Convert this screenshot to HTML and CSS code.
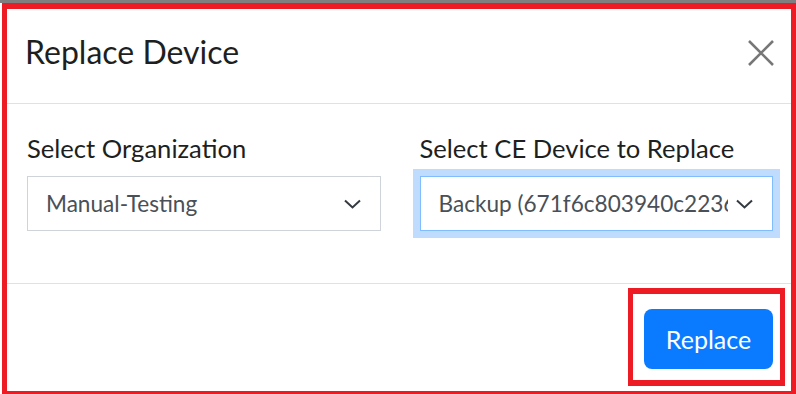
FILE: index.html
```html
<!DOCTYPE html>
<html lang="en">
<head>
    <meta charset="UTF-8">
    <title>Replace Device</title>
    <link rel="stylesheet" href="styles.css">
</head>
<body>
<div class="top-strip"></div>

<div class="modal">
    <div class="modal-header">
        <h2 class="modal-title">Replace Device</h2>
        <button class="close-btn" type="button" aria-label="Close">
            <svg width="26" height="26" viewBox="0 0 26 26">
                <path d="M1 1 L25 25 M25 1 L1 25" stroke="#777" stroke-width="2.6" fill="none"/>
            </svg>
        </button>
    </div>

    <div class="modal-body">
        <div class="field">
            <label class="field-label">Select Organization</label>
            <div class="select">
                <span class="select-text">Manual-Testing</span>
                <svg class="chevron" width="17" height="10" viewBox="0 0 17 10">
                    <path d="M1 1.5 L8.5 8.5 L16 1.5" stroke="#343a40" stroke-width="2" fill="none"/>
                </svg>
            </div>
        </div>
        <div class="field">
            <label class="field-label">Select CE Device to Replace</label>
            <div class="select focused">
                <span class="select-text">Backup (671f6c803940c22368a1e5d7)</span>
                <svg class="chevron" width="17" height="10" viewBox="0 0 17 10">
                    <path d="M1 1.5 L8.5 8.5 L16 1.5" stroke="#343a40" stroke-width="2" fill="none"/>
                </svg>
            </div>
        </div>
    </div>

    <div class="modal-footer">
        <div class="highlight">
            <button class="btn-primary" type="button">Replace</button>
        </div>
    </div>
</div>
</body>
</html>
```

FILE: styles.css
```css
:root {
    --mark-red: #ed1c24;
    --primary: #0a7bff;
    --text: #1d1f21;
    --muted: #495057;
    --line: #dee2e6;
}

* {
    margin: 0;
    padding: 0;
    box-sizing: border-box;
    font-family: 'Lato', 'Liberation Sans', sans-serif;
}

body {
    background: #fff;
    color: var(--text);
    overflow: hidden;
}

.top-strip {
    height: 3px;
    background: #7f7f7f;
}

/* рамка-выделение вокруг модалки */
.modal {
    margin-left: 2px;
    border: 5px solid var(--mark-red);
    border-top-width: 6px;
    background: #fff;
}

.modal-header {
    height: 95px;
    display: flex;
    justify-content: space-between;
    align-items: flex-start;
    padding: 24px 17px 0 18px;
    border-bottom: 1px solid var(--line);
}

.modal-title {
    font-size: 32px;
    font-weight: 400;
    line-height: 1.2;
    color: var(--text);
}

.close-btn {
    margin-top: 7px;
    background: none;
    border: none;
    width: 26px;
    height: 26px;
    cursor: pointer;
}

.close-btn svg {
    display: block;
}

.modal-body {
    display: grid;
    grid-template-columns: minmax(0, 1fr) minmax(0, 1fr);
    gap: 39px;
    padding: 29px 18px 52px 20px;
}

.field-label {
    display: block;
    font-size: 25.6px;
    line-height: 30px;
    color: var(--text);
    margin-bottom: 13px;
}

.select {
    height: 55px;
    display: flex;
    align-items: center;
    gap: 8px;
    padding: 0 19px 0 18px;
    border: 1px solid #ced4da;
    background: #fff;
}

.select.focused {
    border-color: #80bdff;
    box-shadow: 0 0 0 7px #bfdcff;
}

.select-text {
    flex: 1;
    min-width: 0;
    overflow: hidden;
    white-space: nowrap;
    font-size: 22.6px;
    line-height: 1.2;
    color: var(--muted);
}

.chevron {
    flex-shrink: 0;
    display: block;
}

.modal-footer {
    display: flex;
    justify-content: flex-end;
    padding: 4px 6px 5px;
    border-top: 1px solid var(--line);
}

/* красная рамка-пометка вокруг кнопки */
.highlight {
    border: 5px solid var(--mark-red);
    border-top-width: 6px;
    border-bottom-width: 6px;
    padding: 15px 7px 11px 11px;
}

.btn-primary {
    width: 129px;
    height: 60px;
    border: none;
    border-radius: 8px;
    background: var(--primary);
    color: #fff;
    font-size: 25px;
    cursor: pointer;
}
```
